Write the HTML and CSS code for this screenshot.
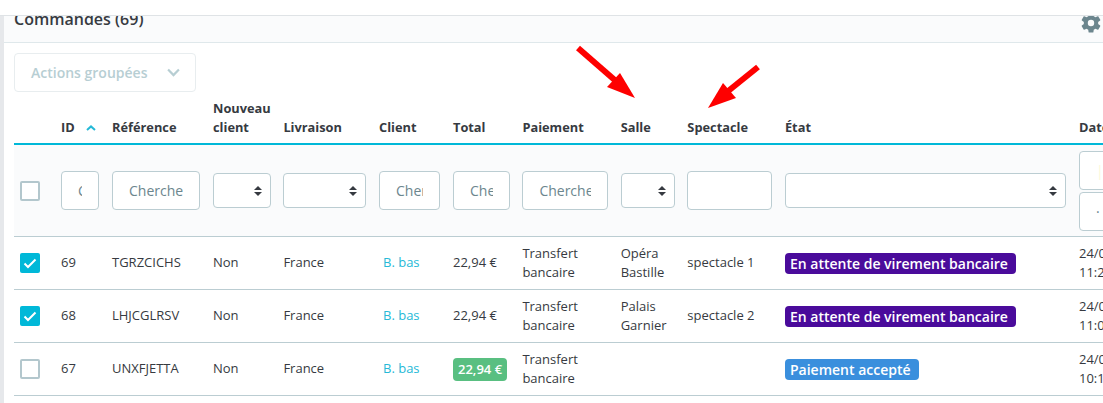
FILE: index.html
```html
<!DOCTYPE html>
<html lang="fr">
<head>
<meta charset="utf-8">
<title>Commandes</title>
<link rel="stylesheet" href="styles.css">
</head>
<body>
<div class="topbar"></div>
<main class="panel">
  <header class="panel-head">
    <h1 class="panel-title">Commandes (69)</h1>
    <svg class="gear" viewBox="0 0 24 24"><path d="M19.14 12.94c.04-.3.06-.61.06-.94 0-.32-.02-.64-.07-.94l2.03-1.58c.18-.14.23-.41.12-.61l-1.92-3.32c-.12-.22-.37-.29-.59-.22l-2.39.96c-.5-.38-1.03-.7-1.62-.94l-.36-2.54c-.04-.24-.24-.41-.48-.41h-3.84c-.24 0-.43.17-.47.41l-.36 2.54c-.59.24-1.13.57-1.62.94l-2.39-.96c-.22-.08-.47 0-.59.22L2.74 8.87c-.12.21-.08.47.12.61l2.03 1.58c-.05.3-.09.63-.09.94s.02.64.07.94l-2.03 1.58c-.18.14-.23.41-.12.61l1.92 3.32c.12.22.37.29.59.22l2.39-.96c.5.38 1.03.7 1.62.94l.36 2.54c.05.24.24.41.48.41h3.84c.24 0 .44-.17.47-.41l.36-2.54c.59-.24 1.13-.56 1.62-.94l2.39.96c.22.08.47 0 .59-.22l1.92-3.32c.12-.22.07-.47-.12-.61l-2.01-1.58zM12 15.2a3.2 3.2 0 1 1 0-6.4 3.2 3.2 0 0 1 0 6.4z"/></svg>
  </header>
  <div class="panel-body">
    <button class="bulk" type="button">
      <span>Actions groupées</span>
      <svg class="bulk-chevron" viewBox="0 0 12 8"><path d="M1 1.2 6 6.4l5-5.2"/></svg>
    </button>
    <table class="orders">
      <colgroup>
        <col class="c-check"><col class="c-id"><col class="c-ref"><col class="c-new"><col class="c-ship"><col class="c-client"><col class="c-total"><col class="c-pay"><col class="c-room"><col class="c-show"><col class="c-state"><col class="c-date">
      </colgroup>
      <thead>
        <tr class="titles">
          <th></th>
          <th><span class="id-head">ID<svg class="sort" viewBox="0 0 10 6"><path d="M1 5 5 1.4 9 5"/></svg></span></th>
          <th>Référence</th>
          <th>Nouveau client</th>
          <th>Livraison</th>
          <th>Client</th>
          <th>Total</th>
          <th>Paiement</th>
          <th>Salle</th>
          <th>Spectacle</th>
          <th>État</th>
          <th>Date</th>
        </tr>
        <tr class="filters">
          <td><span class="check"></span></td>
          <td><input class="field" placeholder="Chercher"></td>
          <td><input class="field" placeholder="Chercher"></td>
          <td><span class="pick"><select class="choice"><option></option></select></span></td>
          <td><span class="pick"><select class="choice"><option></option></select></span></td>
          <td><input class="field" placeholder="Chercher"></td>
          <td><input class="field" placeholder="Chercher"></td>
          <td><input class="field" placeholder="Chercher"></td>
          <td><span class="pick"><select class="choice"><option></option></select></span></td>
          <td><input class="field"></td>
          <td><span class="pick"><select class="choice"><option></option></select></span></td>
          <td class="dates"><input class="field date-from" placeholder="|"><input class="field date-to" placeholder="·"></td>
        </tr>
      </thead>
      <tbody>
        <tr>
          <td><span class="check on"><svg viewBox="0 0 20 20"><path d="M4.5 10.5 8 14l7.5-7.5"/></svg></span></td>
          <td>69</td><td>TGRZCICHS</td><td>Non</td><td>France</td>
          <td><a class="client" href="#">B. bas</a></td>
          <td>22,94 €</td><td>Transfert bancaire</td><td>Opéra Bastille</td><td>spectacle 1</td>
          <td><span class="badge purple">En attente de virement bancaire</span></td>
          <td>24/05/2021<br>11:27:14</td>
        </tr>
        <tr>
          <td><span class="check on"><svg viewBox="0 0 20 20"><path d="M4.5 10.5 8 14l7.5-7.5"/></svg></span></td>
          <td>68</td><td>LHJCGLRSV</td><td>Non</td><td>France</td>
          <td><a class="client" href="#">B. bas</a></td>
          <td>22,94 €</td><td>Transfert bancaire</td><td>Palais Garnier</td><td>spectacle 2</td>
          <td><span class="badge purple">En attente de virement bancaire</span></td>
          <td>24/05/2021<br>11:05:32</td>
        </tr>
        <tr>
          <td><span class="check"></span></td>
          <td>67</td><td>UNXFJETTA</td><td>Non</td><td>France</td>
          <td><a class="client" href="#">B. bas</a></td>
          <td><span class="badge green">22,94 €</span></td><td>Transfert bancaire</td><td></td><td></td>
          <td><span class="badge blue">Paiement accepté</span></td>
          <td>24/05/2021<br>10:14:08</td>
        </tr>
      </tbody>
    </table>
  </div>
  <svg class="arrows" viewBox="0 0 1103 403">
    <path d="M578 48 617 82"/>
    <polygon points="635,98 607,87 620,73"/>
    <path d="M758 67 727 92"/>
    <polygon points="708,108 723,83 736,98"/>
  </svg>
</main>
</body>
</html>
```

FILE: styles.css
```css
* { box-sizing: border-box; }

html, body {
  margin: 0;
  height: 100%;
  overflow: hidden;
  background: #fff;
}

body {
  font-family: "Open Sans", "Liberation Sans", sans-serif;
  font-size: 13px;
  line-height: 19.5px;
  color: #363a41;
}

.topbar {
  position: absolute;
  top: 0;
  left: 0;
  right: 0;
  height: 16px;
  background: #fff;
  border-bottom: 1px solid #dfe3e6;
  z-index: 2;
}

.panel {
  height: 403px;
  border-left: 4px solid #e6e8eb;
  overflow: hidden;
}

.panel-head {
  display: flex;
  justify-content: space-between;
  height: 43px;
  padding: 7px 0 0 10px;
  background: #fafbfc;
  border-bottom: 1px solid #dfe8eb;
}

.panel-title {
  margin: 0;
  font-size: 16px;
  font-weight: 600;
  line-height: 24px;
}

.gear {
  width: 24px;
  height: 24px;
  margin-top: 4px;
  fill: #6c868e;
}

.panel-body {
  padding: 10px 0 0 10px;
}

.bulk {
  display: flex;
  align-items: center;
  justify-content: space-between;
  width: 182px;
  height: 39px;
  padding: 0 15px 0 16px;
  background: #fff;
  border: 1px solid #e8edef;
  border-radius: 4px;
  font: 600 14px/1 "Open Sans", sans-serif;
  color: #b7ced3;
}

.bulk-chevron {
  width: 13px;
  height: 9px;
  fill: none;
  stroke: #b7ced3;
  stroke-width: 2;
}

.orders {
  width: 1159px;
  table-layout: fixed;
  border-collapse: separate;
  border-spacing: 0;
}

.c-check { width: 41px; }
.c-id { width: 51px; }
.c-ref { width: 101px; }
.c-new { width: 70.4px; }
.c-ship { width: 95.6px; }
.c-client { width: 74px; }
.c-total { width: 69.4px; }
.c-pay { width: 98.3px; }
.c-room { width: 66.7px; }
.c-show { width: 97.6px; }
.c-state { width: 294px; }
.c-date { width: 100px; }

.orders th,
.orders td {
  padding: 0 6.7px 0 6px;
  text-align: left;
  vertical-align: middle;
}

.orders th {
  height: 53px;
  padding-bottom: 6px;
  vertical-align: bottom;
  font-size: 12.8px;
  font-weight: 700;
  line-height: 19px;
  border-bottom: 2px solid #00b8d8;
}

.id-head {
  display: flex;
  align-items: center;
  gap: 11px;
}

.sort {
  width: 10px;
  height: 6px;
  fill: none;
  stroke: #25b9d7;
  stroke-width: 2;
}

.filters td {
  height: 92px;
  background: #fafbfc;
  border-bottom: 1px solid #bbcdd2;
}

.orders tbody td {
  height: 53px;
  border-bottom: 1px solid #bbcdd2;
}

.field {
  display: block;
  width: 100%;
  height: 39px;
  padding: 0 16px;
  background: #fff;
  border: 1px solid #bbcdd2;
  border-radius: 4px;
  font: 14px "Open Sans", sans-serif;
  color: #363a41;
}

.field::placeholder {
  color: #6c868e;
  opacity: 1;
}

.date-from {
  margin-bottom: 2px;
}

.date-from::placeholder {
  color: #fcf8d8;
}

.pick {
  position: relative;
  display: block;
}

.pick::before,
.pick::after {
  content: "";
  position: absolute;
  right: 9px;
  width: 0;
  height: 0;
  border-left: 4px solid transparent;
  border-right: 4px solid transparent;
  pointer-events: none;
}

.pick::before {
  top: 13px;
  border-bottom: 4px solid #363a41;
}

.pick::after {
  top: 19px;
  border-top: 4px solid #363a41;
}

.choice {
  display: block;
  width: 100%;
  height: 35px;
  padding: 0 24px 0 10px;
  appearance: none;
  background: #fff;
  border: 1px solid #bbcdd2;
  border-radius: 4px;
  font: 14px "Open Sans", sans-serif;
}

.check {
  display: block;
  width: 20px;
  height: 20px;
  background: #fff;
  border: 2px solid #b3c7cd;
  border-radius: 2px;
}

.check.on {
  background: #00b8d8;
  border: 0;
}

.check svg {
  display: block;
  width: 20px;
  height: 20px;
  fill: none;
  stroke: #fff;
  stroke-width: 2;
}

.client {
  padding-left: 4px;
  color: #25b9d7;
  text-decoration: none;
}

.badge {
  display: inline-block;
  padding: 0 8px 0 5px;
  border-radius: 4px;
  font-size: 14px;
  font-weight: 600;
  line-height: 21px;
  color: #fff;
  white-space: nowrap;
  vertical-align: middle;
}

.purple { background: #4a0b9b; }
.blue { background: #3a8fdd; }

.green {
  padding: 1px 5px;
  background: #59bf81;
  font-size: 13px;
}

.arrows {
  position: absolute;
  top: 0;
  left: 0;
  width: 1103px;
  height: 403px;
  pointer-events: none;
  z-index: 3;
}

.arrows path {
  fill: none;
  stroke: #fe0000;
  stroke-width: 6;
}

.arrows polygon {
  fill: #fe0000;
}
```
